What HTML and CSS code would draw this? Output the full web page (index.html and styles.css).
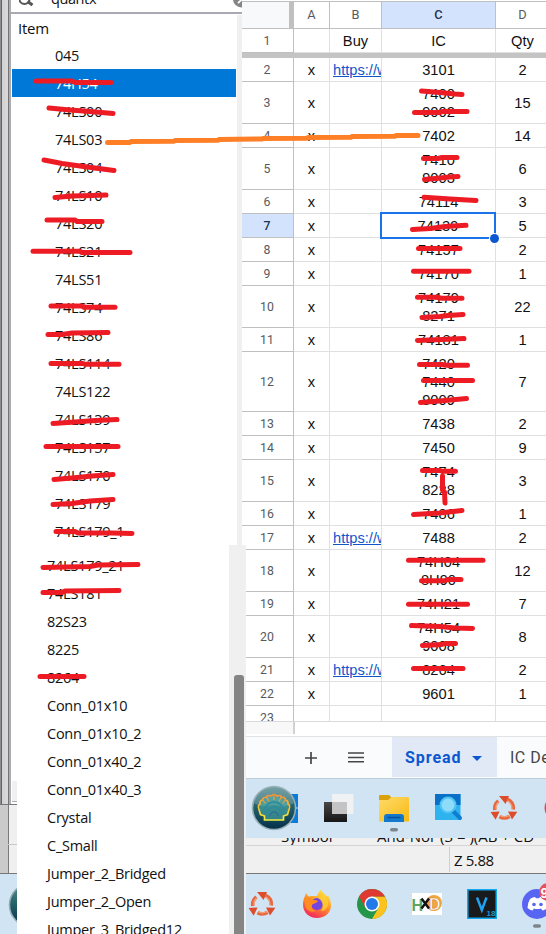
FILE: index.html
```html
<!DOCTYPE html>
<html lang="en">
<head>
<meta charset="utf-8">
<title>Parts list</title>
<link rel="stylesheet" href="styles.css">
</head>
<body>
<svg class="defs" width="0" height="0">
  <defs>
    <linearGradient id="shellBg" x1="0" y1="0" x2="0" y2="1"><stop offset="0" stop-color="#5c8f94"/><stop offset=".45" stop-color="#23636b"/><stop offset="1" stop-color="#052f49"/></linearGradient>
    <linearGradient id="shellLine" x1="0" y1="0" x2="0" y2="1"><stop offset="0" stop-color="#f0913a"/><stop offset="1" stop-color="#f5f03c"/></linearGradient>
    <linearGradient id="dark" x1="0" y1="0" x2="0" y2="1"><stop offset="0" stop-color="#484848"/><stop offset="1" stop-color="#161616"/></linearGradient>
    <linearGradient id="folder" x1="0" y1="0" x2="1" y2="1"><stop offset="0" stop-color="#ffdb6b"/><stop offset="1" stop-color="#f8b912"/></linearGradient>
    <linearGradient id="fox" x1=".8" y1="0" x2=".3" y2="1"><stop offset="0" stop-color="#fff04a"/><stop offset=".45" stop-color="#ff9a26"/><stop offset="1" stop-color="#f5235e"/></linearGradient>
    <symbol id="cycle" viewBox="0 0 28 26">
      <g fill="none" stroke="#e8693f" stroke-width="3.6"><path d="M8.4 5.8A10 10 0 0 0 4.8 15"/><path d="M17.5 4.4A10 10 0 0 1 23.2 14.5"/><path d="M9.5 21.6A10 10 0 0 0 19.5 21.4"/></g>
      <g fill="none" stroke="#f4a27c" stroke-width="1.2"><path d="M8.6 6.8A9 9 0 0 0 6 14"/><path d="M17.5 5.8A9 9 0 0 1 22 14"/><path d="M10 20.6A9 9 0 0 0 19 20.6"/></g>
      <path fill="#dd4d2b" d="M9 1h10l-3.4 8zM.6 17l9-.6-4 8.4zM18 16.4l9.4.4-5.4 7.8z"/>
    </symbol>
  </defs>
</svg>
<div class="desktop">
  <aside class="library">
    <div class="upper">
      <div class="edge"></div>
      <div class="pane">
        <div class="search">
          <svg class="glass" width="16" height="12" viewBox="0 0 16 12"><circle cx="5.5" cy="-1" r="5" fill="none" stroke="#555" stroke-width="2"/><path d="M8.5 1.500l5 3.500" stroke="#555" stroke-width="3"/></svg>
          <span class="query">quantx</span>
          <svg class="clear" width="9" height="12" viewBox="0 0 9 12"><circle cx="8.5" cy="-1" r="8.5" fill="#858585"/><path d="M5 3.2l6-6" stroke="#fff" stroke-width="1.8"/></svg>
        </div>
        <div class="tree">
          <ul class="items">
            <li class="head">Item</li>
            <li>045</li>
            <li class="selected">74H54</li>
            <li>74LS00</li><li>74LS03</li><li>74LS04</li><li>74LS10</li><li>74LS20</li><li>74LS21</li><li>74LS51</li><li>74LS74</li><li>74LS86</li><li>74LS114</li><li>74LS122</li><li>74LS139</li><li>74LS157</li><li>74LS170</li><li>74LS179</li><li>74LS179_1</li>
          </ul>
          <div class="gutter"></div>
        </div>
      </div>
    </div>
    <div class="lower">
      <div class="frame">
        <div class="frame-top"><div class="edge"></div><div class="inner"><i></i></div></div>
        <div class="frame-status"><b></b><i></i></div>
        <div class="frame-task"><svg width="17" height="60" viewBox="0 0 17 60"><circle cx="31" cy="31" r="21.5" fill="url(#shellBg)" stroke="#93a9ae" stroke-width="1.5"/></svg></div>
      </div>
      <ul class="items more">
        <li>74LS179_21</li><li>74LS181</li><li>82S23</li><li>8225</li><li>8264</li><li>Conn_01x10</li><li>Conn_01x10_2</li><li>Conn_01x40_2</li><li>Conn_01x40_3</li><li>Crystal</li><li>C_Small</li><li>Jumper_2_Bridged</li><li>Jumper_2_Open</li><li>Jumper_3_Bridged12</li>
      </ul>
      <div class="scroll"><div class="thumb"></div></div>
    </div>
  </aside>

  <main class="right">
    <div class="sheet">
      <div class="row cols"><span class="corner"></span><span>A</span><span>B</span><span class="on">C</span><span>D</span></div>
      <div class="row first"><span>1</span><span></span><span>Buy</span><span>IC</span><span>Qty</span></div>
      <div class="row"><span>2</span><span>x</span><span class="link"><a>https://www</a></span><span>3101</span><span>2</span></div>
      <div class="row two"><span>3</span><span>x</span><span></span><span>7400<br>9002</span><span>15</span></div>
      <div class="row"><span>4</span><span>x</span><span></span><span>7402</span><span>14</span></div>
      <div class="row two"><span>5</span><span>x</span><span></span><span>7410<br>9003</span><span>6</span></div>
      <div class="row"><span>6</span><span>x</span><span></span><span>74114</span><span>3</span></div>
      <div class="row active"><span>7</span><span>x</span><span></span><span class="cell">74139</span><span>5</span></div>
      <div class="row"><span>8</span><span>x</span><span></span><span>74157</span><span>2</span></div>
      <div class="row"><span>9</span><span>x</span><span></span><span>74170</span><span>1</span></div>
      <div class="row two"><span>10</span><span>x</span><span></span><span>74179<br>8271</span><span>22</span></div>
      <div class="row"><span>11</span><span>x</span><span></span><span>74181</span><span>1</span></div>
      <div class="row three"><span>12</span><span>x</span><span></span><span>7420<br>7440<br>9009</span><span>7</span></div>
      <div class="row"><span>13</span><span>x</span><span></span><span>7438</span><span>2</span></div>
      <div class="row"><span>14</span><span>x</span><span></span><span>7450</span><span>9</span></div>
      <div class="row two"><span>15</span><span>x</span><span></span><span>7474<br>8228</span><span>3</span></div>
      <div class="row"><span>16</span><span>x</span><span></span><span>7486</span><span>1</span></div>
      <div class="row"><span>17</span><span>x</span><span class="link"><a>https://www</a></span><span>7488</span><span>2</span></div>
      <div class="row two"><span>18</span><span>x</span><span></span><span>74H04<br>8H90</span><span>12</span></div>
      <div class="row"><span>19</span><span>x</span><span></span><span>74H21</span><span>7</span></div>
      <div class="row two"><span>20</span><span>x</span><span></span><span>74H54<br>9008</span><span>8</span></div>
      <div class="row"><span>21</span><span>x</span><span class="link"><a>https://www</a></span><span>8264</span><span>2</span></div>
      <div class="row"><span>22</span><span>x</span><span></span><span>9601</span><span>1</span></div>
      <div class="row"><span>23</span><span></span><span></span><span></span><span></span></div>
    </div>
    <div class="under"><i></i></div>
    <nav class="tabs">
      <svg class="plus" width="12" height="12" viewBox="0 0 12 12"><path d="M6 0v12M0 6h12" stroke="#444746" stroke-width="1.7"/></svg>
      <svg class="menu" width="16" height="11" viewBox="0 0 16 11"><path d="M0 1h16M0 5.4h16M0 9.8h16" stroke="#444746" stroke-width="1.5"/></svg>
      <div class="tab"><span>Spread</span><svg width="10" height="5" viewBox="0 0 10 5"><path d="M0 0h10L5 5z" fill="#0b57d0"/></svg></div>
      <div class="next">IC Detail</div>
    </nav>
    <div class="taskbar edged">
      <svg width="304" height="60" viewBox="242 778 304 60">
        <path d="M276 794h22v13.500h-22zM276 808.500h22V823h-22z" fill="#0a7bd6"/>
        <circle cx="274" cy="808" r="21.500" fill="url(#shellBg)" stroke="#9bb0b5" stroke-width="1.500"/>
        <path d="M254 803a20.500 20.500 0 0 1 40 0q-7 5-20 2-13 3-20-2z" fill="#9fc0c2" opacity=".35"/>
        <path d="M264.500 820v-4l-4-2q-3-12 5-15 8-5 17 0 8 3 5 15l-4 2v4z" fill="#4fb5b0" opacity=".55"/>
        <g fill="none" stroke="#2c8b9c" stroke-width="1.500"><path d="M264 812a10 10 0 0 1 20 0"/><path d="M267 814a7 7 0 0 1 14 0"/><path d="M270 816a4 4 0 0 1 8 0" stroke="#2f6f9a"/></g>
        <path d="M264.500 820v-4l-4-1.500-1.500-5q-1.500-4 1-5.500-.5-3.500 2.500-4 .5-3.500 4-2.500 1-3 4-1.500l3.500-1.500 3.500 1.500q3-1.500 4 1.500 3.500-1 4 2.500 3 .5 2.500 4 2.500 1.500 1 5.500l-1.500 5-4 1.500v4z" fill="none" stroke="url(#shellLine)" stroke-width="1.700"/>
        <path d="M262.500 800l3 3.500M267 797.500l2 4M274 796v4M281 797.500l-2 4M285.500 800l-3 3.500" stroke="#eda03c" stroke-width="1.100"/>
        <path d="M324 802h23v20h-23z" fill="url(#dark)"/>
        <path d="M332 794h21.500v20H332z" fill="#f2f2f2" opacity=".92"/><path d="M332 802h15v12h-15z" fill="#c4c4c4"/>
        <path d="M379 796q0-1 1-1h9l3 3v6h-13z" fill="#dca00a"/>
        <path d="M379 800h9l3.500-3H408q1 0 1 1v23q0 .5-.5.5H379.500q-.5 0-.5-.5z" fill="url(#folder)"/>
        <path d="M384 822v-5q0-3 3-3h14q3 0 3 3v5z" fill="#1379cf"/><path d="M388 817.500h12" stroke="#0b4f94" stroke-width="1.300" stroke-linecap="round"/>
        <rect x="390" y="828" width="8" height="3.600" rx="1.800" fill="#7d858c"/>
        <path d="M435 794h25.500v26H435z" fill="#2fb3ee"/><path d="M435 794h25.500v11H435z" fill="#0a70c7"/>
        <path d="M453 811l7 7" stroke="#0f7dd2" stroke-width="4" stroke-linecap="round"/><circle cx="448" cy="805" r="7.500" fill="#8fdcfa" stroke="#4fc3f5" stroke-width="2"/>
        <use href="#cycle" x="490" y="795" width="28" height="26"/>
        <circle cx="557" cy="808" r="12.500" fill="#ef4058"/>
      </svg>
    </div>
    <div class="status">
      <div class="fields"><span>Symbol</span><span class="desc">And-Nor (3 = )(AB + CD</span></div>
      <div class="coords"><span>Z 5.88</span></div>
    </div>
    <div class="taskbar">
      <svg width="304" height="60" viewBox="242 874 304 60">
        <use href="#cycle" x="248" y="891" width="28" height="26"/>
        <path d="M303 905c0-6 2-8 3-12 1 2 2 3 3 3.500 4-1 6 0 8-.5 1-3 2-5 4-6.500 1 3 3 4 5 6 1 1 1.500 1 2-.5 2 4 3 7 3 10.500 0 7-6 12.500-14 12.500s-14-6-14-13z" fill="url(#fox)"/>
        <circle cx="317" cy="904" r="6" fill="#7346e0"/><path d="M304 899c4-2 7-1 10 1 2 .5 3 0 4 1-2 3-5 2-6 4-1 3 1 5 4 6-6 2-10-1-11-6z" fill="#ff8d1f"/><path d="M318 898c3-3 3-5 3-7 4 4 8 8 7 14-1 4-4 6-7 6 3-4 2-10-3-13z" fill="#ffce33" opacity=".8"/>
        <circle cx="372" cy="904" r="15" fill="#23964a"/><path d="M372 896.500h13A15 15 0 0 1 372 919l6.500-11.250z" fill="#fcc31e"/><path d="M359 896.500A15 15 0 0 1 385 896.500H372l-6.500 11.250z" fill="#df3a30"/>
        <circle cx="372" cy="904" r="7.500" fill="#fff"/><circle cx="372" cy="904" r="6" fill="#2379e8"/>
        <path d="M412 893h30v22h-30z" fill="#fff"/><circle cx="434" cy="903" r="8" fill="#f2a540"/>
        <text x="411.500" y="911" class="hx" fill="#5aa662">H</text><text x="429" y="910" class="hx" fill="#fff" stroke="#d58a2b" stroke-width=".6">D</text><path d="M421.500 898.500l7.500 10M429 898.500l-7.500 10" stroke="#111" stroke-width="2.400"/>
        <path d="M467.750 889.750h28.500v28.500h-28.500z" fill="#181a1c" stroke="#10a8ee" stroke-width="1.500"/><path d="M477 897.500l4.800 12.500L486.500 897.500" fill="none" stroke="#20a4f3" stroke-width="2.400"/><text x="486.500" y="916" class="ver" fill="#1995d8">18</text>
        <circle cx="537" cy="904" r="15" fill="#5865f2"/><path d="M530 899q3-2 5-2l1 1.300h3l1-1.300q3 0 5 2 2.500 4 2.500 9-2.500 2-5 2.500l-1.500-2q-4 1-7 0l-1.500 2q-2.500-.5-5-2.500 0-5 2.500-9z" fill="#fff"/><circle cx="534" cy="904.500" r="1.800" fill="#5865f2"/><circle cx="541" cy="904.500" r="1.800" fill="#5865f2"/>
        <circle cx="548" cy="892" r="9" fill="#e8505b"/><text x="540.500" y="898" class="badge" fill="#fff">9</text>
        <rect x="533" y="924.200" width="8" height="3.600" rx="1.800" fill="#7d858c"/>
      </svg>
    </div>
  </main>

  <svg class="marks" width="546" height="934" viewBox="0 0 546 934">
    <g class="red">
      <path d="M36 81H72L75 82.500H111"/><path d="M49 108L70 110 90 111.500 113 113.500"/><path d="M44 160L62 163.500 80 166 95 168 114 170.500"/>
      <path d="M55 197.500L72 196 92 195.500 106 195"/><path d="M47 220H75L77 221.500H102"/><path d="M33 251.300H80L82 252.500H130"/>
      <path d="M51 306H82L84 307.300H115"/><path d="M48 334.500H62L72 333 108 332.500"/><path d="M51 363.500H83L85 364.300H119"/>
      <path d="M53 423.500L75 422 95 420.500 117 419.500"/><path d="M46 446.500H118"/><path d="M54 479.500L72 478 92 476 113 474.500"/>
      <path d="M53 504.500L72 503.500 90 501 113 499.500"/><path d="M56 531.500H75L78 533H112L132 533.500"/><path d="M43 567.500L90 566.500 98 565 138 564.500"/>
      <path d="M43 592.500H62L65 591 119 590.500"/><path d="M40 676.500H84"/>
      <path d="M421.500 91L440 92.500 455 94 462 94.500"/><path d="M414.500 112.500H440L442 111.500H467"/><path d="M423.500 158.500H438L442 157.500H457"/>
      <path d="M424.500 179.500L440 178 450 177 458 176.500"/><path d="M424 197.300L450 199 476 200.500"/><path d="M412.500 229.500L430 228.500 445 226.500 466 225.300"/>
      <path d="M418.500 248.500H460"/><path d="M413.500 271.300H469"/><path d="M417.500 297.300H436L442 298.300H462"/>
      <path d="M422 317.500L440 316.500 448 315.500 463 314.500"/><path d="M417.500 340.500L442 339.500 464 338.500"/><path d="M419.500 364.500H442L446 365.300H467.500"/>
      <path d="M423.500 380.500H472.500"/><path d="M420.500 402.500L445 400.500 466.500 398.500"/><path d="M422.500 470.500H440L442 471.300H455.500"/>
      <path d="M442.500 476V490L444.500 492 445 503"/><path d="M413.500 514.500L440 513 462 510.500"/><path d="M408.500 560.300H483"/>
      <path d="M421.500 580.800H445L447 579.500H461"/><path d="M408.500 604.300H467.500"/><path d="M411.500 625.500L440 626.500 455 628 472.500 628.500"/>
      <path d="M422.500 645.500L442 644.500 445 643.500H455.500"/><path d="M413.500 668.500H463"/>
    </g>
    <path class="orange" d="M107.500 142.400H130L131 141.500 174 141.200 175 140.500 218 140.200 219 139.400 262 139 263 138.500 307 138.200 308 137.500 351 137.300 352 136.500 395 136.300 396 135.500 418 135.500"/>
  </svg>
</div>
</body>
</html>
```

FILE: styles.css
```css
* { box-sizing: border-box; }
html, body { margin: 0; height: 934px; overflow: hidden; background: #fff; }
ul { list-style: none; margin: 0; padding: 0; }
svg { display: block; flex: none; }
.defs { position: absolute; }
.desktop { position: relative; display: grid; grid-template-columns: 242px 304px; width: 546px; height: 934px; overflow: hidden; }

/* library list */
.library { position: relative; z-index: 1; width: 246px; height: 934px; font: 14.5px/28px "Open Sans", sans-serif; letter-spacing: -0.25px; color: #111; }
.upper { display: flex; width: 242px; height: 545px; background: #fff; }
.edge { flex: none; width: 11px; background: linear-gradient(90deg, #8e8e90 0 1px, #626468 1px 2px, #d2d2d2 2px, #dadada 8px, #747477 8px 9px, #adadb0 9px); }
.pane { flex: 1; }
.search { display: flex; height: 14px; overflow: hidden; border-bottom: 2px solid #aaa9b1; padding-left: 8px; }
.query { margin: -15px 0 0 16px; font-size: 14.5px; letter-spacing: -0.4px; }
.search .clear { margin-left: auto; }
.tree { display: flex; height: 531px; }
.items { flex: 1; }
.items li { height: 28px; padding-left: 43px; margin: 0 1px; line-height: 30px; white-space: nowrap; }
.items .head { height: 27px; padding-left: 6px; line-height: 29px; font-size: 15px; }
.items .selected { background: #0078d7; color: #fff; }
.gutter { width: 5px; margin-top: 1px; background: #f0f0f0; }
.lower { display: flex; width: 246px; height: 389px; }
.frame { width: 17px; }
.frame-top { display: flex; height: 260px; border-bottom: 1px solid #77797c; }
.inner { display: flex; flex: 1; flex-direction: column; justify-content: flex-end; background: #fff; padding: 0 0 2px 1px; }
.inner i { height: 21px; background: #f0f0f0; border-bottom: 1px solid #aaa; }
.frame-status { display: flex; flex-direction: column; height: 69px; border-bottom: 1px solid #777; background: linear-gradient(90deg, #cacaca 0 8px, #77797c 8px 9px, #f0f0f0 9px); }
.frame-status b { height: 40px; border-bottom: 1px solid #c9c9c9; }
.frame-task { height: 60px; background: #d1e4f3; }
.more { width: 212px; flex: none; height: 389px; padding-top: 7px; overflow: hidden; background: #fff; }
.more li { padding-left: 29px; line-height: 28px; }
.scroll { width: 17px; height: 389px; background: #f0f0f0; padding: 130px 2px 0 5px; }
.thumb { height: 270px; border-radius: 3px 3px 0 0; background: #858585; }

/* spreadsheet */
.right { width: 304px; height: 934px; }
.sheet { height: 722px; padding-top: 1px; overflow: hidden; border-bottom: 1px solid #d9dadb; font: 14.67px/18px "Liberation Sans", sans-serif; color: #111; }
.row { display: grid; grid-template-columns: 52px 36px 52px 114px 54px; height: 24px; }
.row > span { display: flex; align-items: center; justify-content: center; border-right: 1px solid #e0e0e0; border-bottom: 1px solid #e0e0e0; overflow: hidden; text-align: center; }
.row > span:first-child { font: 12.3px/18px Roboto, sans-serif; color: #575a5d; border-color: #c0c0c0; padding-right: 1px; }
.two { height: 42px; }
.three { height: 60px; }
.cols { height: 28px; border-top: 1px solid #c0c0c0; font: 12.8px/18px Roboto, sans-serif; color: #575a5d; }
.row.cols > span { border-color: #c0c0c0; }
.row.cols > .corner { background: #f8f9fa; border-right: 5px solid #c0c0c0; }
.cols > .on { background: #d3e3fd; color: #1d3350; font-weight: 500; }
.first { height: 29px; border-bottom: 5px solid #c4c4c4; }
.row > .link { justify-content: flex-start; padding-left: 3px; }
.link a { color: #1155cc; text-decoration: underline; }
.active > span:first-child { background: #d3e3fd; color: #1d3350; font-weight: 500; }
.active > .cell { position: relative; overflow: visible; border: 0; outline: 2px solid #1a73e8; outline-offset: -1px; margin: -1px 1px 0 -1px; }
.cell::after { content: ""; position: absolute; right: -4px; bottom: -5px; width: 9px; height: 9px; border-radius: 50%; background: #0b57d0; box-shadow: 0 0 0 1px #fff; }
.under { height: 15px; border-bottom: 1px solid #e1e3e4; background: #fff; }
.under i { display: block; width: 53px; height: 12px; background: #f8f8f8; border-right: 2px solid #d2d2d2; }
.tabs { display: flex; align-items: center; height: 41px; background: #f9fbfd; padding-left: 63px; font: 500 16px/20px Roboto, sans-serif; letter-spacing: .5px; overflow: hidden; }
.menu { margin-left: 31px; }
.tab { display: flex; align-items: center; gap: 11px; flex: none; width: 105px; height: 40px; margin: 0 13px 1px 28px; padding: 2px 0 0 13px; background: #e1e8f6; color: #0b57d0; font-weight: 700; letter-spacing: .95px; }
.next { font-weight: 400; color: #444746; white-space: nowrap; }
.taskbar { height: 60px; background: #d1e4f3; overflow: hidden; }
.edged { box-shadow: inset 0 1px #bccddb; }
.status { height: 36px; background: #f0f0f0; border-bottom: 1px solid #777; font: 15px/20px "Open Sans", sans-serif; color: #111; }
.fields { display: flex; align-items: flex-end; height: 8px; overflow: hidden; border-bottom: 1px solid #d4d4d4; padding-left: 39px; white-space: nowrap; }
.fields span { width: 96px; line-height: 18px; margin-bottom: 0; flex: none; }
.fields .desc { width: 170px; }
.coords { height: 27px; padding-top: 1px; }
.coords span { display: block; height: 25px; line-height: 27px; margin-left: 207px; padding-left: 4px; border-left: 1px solid #cfcfcf; letter-spacing: -.4px; }
.hx { font: bold 16px "Liberation Sans", sans-serif; }
.ver { font: bold 8px "Liberation Sans", sans-serif; }
.badge { font: bold 14px "Liberation Sans", sans-serif; }

/* pen strokes */
.marks { position: absolute; left: 0; top: 0; z-index: 2; pointer-events: none; fill: none; stroke-linecap: round; stroke-linejoin: round; stroke-width: 5; }
.red { stroke: #ed1c24; }
.orange { stroke: #ff7f27; }
```
